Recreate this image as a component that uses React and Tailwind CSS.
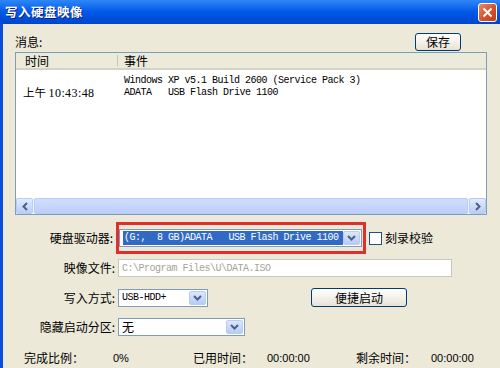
import React from 'react';

const CJK = "font-['Noto_Sans_CJK_SC',sans-serif]";
const MONO = "font-['Liberation_Mono','Noto_Sans_CJK_SC',monospace] text-[10px] tracking-[-0.5px]";

const DropArrow = () => (
  <div className="w-[17px] h-full shrink-0 rounded-[2px] border border-[#B9CCF8] bg-gradient-to-b from-[#DCE6FD] to-[#B6CBF7] flex items-center justify-center">
    <svg width="9" height="6" viewBox="0 0 9 6">
      <path d="M1 1 L4.5 4.5 L8 1" fill="none" stroke="#4D6185" strokeWidth="2" />
    </svg>
  </div>
);

const Combo = ({ width, children }) => (
  <div className={`${width} h-[18px] bg-white border border-[#7F9DB9] flex items-center p-[1px]`}>
    <div className="flex-1 min-w-0 h-full flex items-center px-[2px] leading-none">{children}</div>
    <DropArrow />
  </div>
);

const ScrollArrow = ({ dir }) => (
  <div className="w-[17px] h-full shrink-0 rounded-[2px] border border-[#B9CCF8] bg-gradient-to-b from-[#E1EAFE] to-[#BACDF8] flex items-center justify-center">
    <svg width="6" height="9" viewBox="0 0 6 9">
      <path d={dir === 'left' ? 'M5 1 L1.5 4.5 L5 8' : 'M1 1 L4.5 4.5 L1 8'} fill="none" stroke="#4D6185" strokeWidth="2" />
    </svg>
  </div>
);

const Label = ({ children, width = 'w-[103px]' }) => (
  <div className={`${width} shrink-0 text-right pr-[3px] text-[12px] text-black ${CJK}`}>{children}</div>
);

export default function App() {
  return (
    <div className="w-[500px] h-[368px] overflow-hidden bg-[#ECE9D8] flex flex-col">
      {/* title bar */}
      <div className="h-[24px] shrink-0 flex items-center justify-between pl-[5px] pr-[3px] bg-gradient-to-b from-[#2F86F7] via-[#0058E8] to-[#0045CC]">
        <span className={`text-white font-bold text-[12.5px] tracking-[0.5px] ${CJK} [text-shadow:1px_1px_0_#0A1E80]`}>写入硬盘映像</span>
        <div className="w-[19px] h-[19px] rounded-[3px] border border-white bg-gradient-to-br from-[#E88A6A] via-[#D8542E] to-[#C13D18] flex items-center justify-center">
          <svg width="11" height="11" viewBox="0 0 11 11">
            <path d="M1.5 1.5 L9.5 9.5 M9.5 1.5 L1.5 9.5" stroke="white" strokeWidth="2" />
          </svg>
        </div>
      </div>

      {/* body */}
      <div className="flex-1 flex border-l-[3px] border-[#0A4EDB]">
        <div className="flex-1 pl-[12px] pr-[13px] flex flex-col">
          {/* message header row */}
          <div className="h-[28px] flex items-end justify-between">
            <span className={`text-[12px] text-black mb-[1px] ${CJK}`}>消息:</span>
            <button className={`w-[46px] h-[18px] mb-[1px] mr-[26px] rounded-[3px] border border-[#003C74] bg-gradient-to-b from-white to-[#E6E3D6] text-[12px] text-black flex items-center justify-center ${CJK}`}>
              保存
            </button>
          </div>

          {/* list */}
          <div className="h-[163px] bg-white border border-[#7F9DB9] flex flex-col">
            <div className="h-[17px] flex bg-[#EBEADB] border-b-2 border-[#D6D3C3] text-[12px] text-black">
              <div className={`w-[102px] pl-[9px] border-r border-[#C7C5B2] my-[2px] flex items-center ${CJK}`}>时间</div>
              <div className={`pl-[6px] flex items-center ${CJK}`}>事件</div>
            </div>
            <div className="flex-1 pt-[5px]">
              <div className={`h-[12px] flex items-center pl-[108px] leading-none whitespace-pre ${MONO}`}>
                Windows XP v5.1 Build 2600 (Service Pack 3)
              </div>
              <div className="h-[12px] flex items-center text-[12px] leading-none">
                <span className={`w-[108px] pl-[7px] ${CJK} text-[11.5px]`}>上午 <span className="font-['Liberation_Serif',serif] text-[12px] tracking-[0.4px]">10:43:48</span></span>
                <span className={`whitespace-pre ${MONO}`}>ADATA   USB Flash Drive 1100</span>
              </div>
            </div>
            <div className="h-[16px] flex bg-[#F4F4F0]">
              <ScrollArrow dir="left" />
              <div className="flex-1 mx-[1px] rounded-[2px] border border-[#B9CCF8] bg-gradient-to-b from-[#D2DEFD] to-[#BCCEF9]" />
              <ScrollArrow dir="right" />
            </div>
          </div>

          {/* drive row */}
          <div className="mt-[7px] h-[32px] flex items-center">
            <Label width="w-[101px]">硬盘驱动器:</Label>
            <div className="h-[32px] w-[250px] border-[3px] border-[#E0302E] py-[4px] pr-[1px]">
              <Combo width="w-[243px]">
                <div className={`h-[14px] pr-[4px] bg-[#316AC5] text-white whitespace-pre flex items-center pl-[1px] ${MONO}`}>
                  (G:,  8 GB)ADATA   USB Flash Drive 1100
                </div>
              </Combo>
            </div>
            <div className="ml-[3px] w-[13px] h-[13px] bg-white border border-[#1C5180]" />
            <span className={`ml-[3px] text-[12px] text-black ${CJK}`}>刻录校验</span>
          </div>

          {/* image file */}
          <div className="mt-[5px] h-[18px] flex items-center">
            <Label>映像文件:</Label>
            <div className={`w-[334px] h-[18px] bg-white border border-[#C9C7BA] flex items-center pl-[3px] text-[#A5A39A] whitespace-pre ${MONO}`}>
              C:\Program Files\U\DATA.ISO
            </div>
          </div>

          {/* write mode */}
          <div className="mt-[11px] h-[19px] flex items-center">
            <Label>写入方式:</Label>
            <Combo width="w-[90px]">
              <span className={`text-black ${MONO}`}>USB-HDD+</span>
            </Combo>
            <button className={`ml-[103px] w-[96px] h-[19px] rounded-[3px] border border-[#003C74] bg-gradient-to-b from-white to-[#E6E3D6] text-[12px] text-black flex items-center justify-center ${CJK}`}>
              便捷启动
            </button>
          </div>

          {/* hidden partition */}
          <div className="mt-[10px] h-[19px] flex items-center">
            <Label>隐藏启动分区:</Label>
            <Combo width="w-[127px]">
              <span className={`text-[12px] leading-none text-black ${CJK}`}>无</span>
            </Combo>
          </div>

          {/* progress row */}
          <div className="mt-[13px] h-[18px] flex items-center text-[12px] text-black">
            <span className={`w-[98px] pl-[9px] ${CJK}`}>完成比例：</span>
            <span className="w-[80px] font-['Liberation_Sans',sans-serif] text-[11px]">0%</span>
            <span className={`w-[74px] ${CJK}`}>已用时间：</span>
            <span className="w-[89px] font-['Liberation_Sans',sans-serif] text-[11px]">00:00:00</span>
            <span className={`w-[75px] ${CJK}`}>剩余时间：</span>
            <span className="font-['Liberation_Sans',sans-serif] text-[11px]">00:00:00</span>
          </div>
        </div>
      </div>
    </div>
  );
}
